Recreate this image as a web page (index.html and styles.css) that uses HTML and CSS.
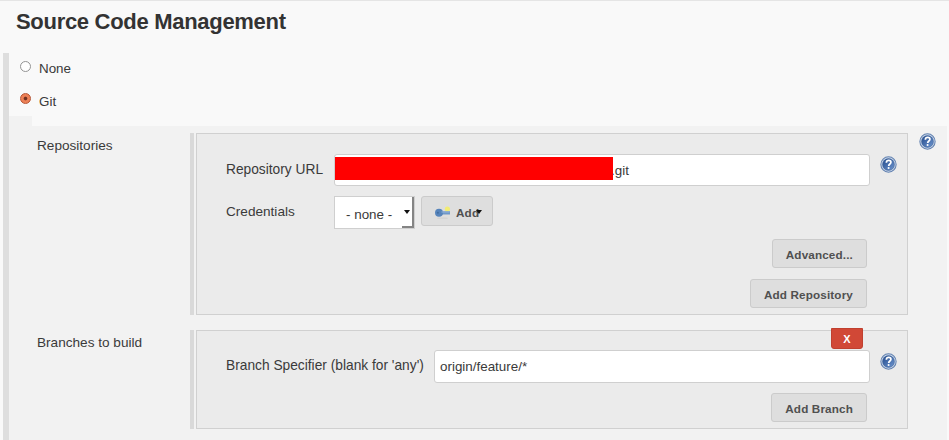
FILE: index.html
```
<!DOCTYPE html>
<html lang="en">
<head>
<meta charset="utf-8">
<title>Source Code Management</title>
<link rel="stylesheet" href="styles.css">
</head>
<body>
<svg class="defs" width="0" height="0" aria-hidden="true">
  <defs>
    <linearGradient id="blue" x1="0" y1="0" x2="1" y2="1">
      <stop offset="0" stop-color="#234b8d"/><stop offset="1" stop-color="#6f96cf"/>
    </linearGradient>
    <symbol id="help" viewBox="0 0 18 18">
      <circle cx="9" cy="9" r="8.1" fill="#cbd8ea" stroke="#6483b1" stroke-width="1.1"/>
      <circle cx="9" cy="9" r="6.3" fill="url(#blue)" stroke="#35598f" stroke-width=".5"/>
      <path d="M6.7 7.1C6.8 5.5 7.8 4.7 9.2 4.7c1.4 0 2.4.8 2.4 2 0 1.8-2.4 1.8-2.4 3.8" fill="none" stroke="#fff" stroke-width="1.8"/>
      <circle cx="9.1" cy="12.7" r="1.1" fill="#fff"/>
    </symbol>
  </defs>
</svg>
<main class="page">
  <h1 class="title">Source Code Management</h1>
  <section class="scm">
    <div class="rail"></div>
    <div class="content">
      <label class="option none"><span class="radio"></span><span class="option-name">None</span></label>
      <label class="option"><span class="radio checked"></span><span class="option-name">Git</span></label>
      <div class="git">
        <div class="row repos">
          <div class="row-label">Repositories</div>
          <div class="handle"></div>
          <div class="panel">
            <div class="field">
              <span class="label">Repository URL</span>
              <div class="input"><span class="redacted"></span><span class="suffix">.git</span></div>
              <svg class="help"><use href="#help"/></svg>
            </div>
            <div class="field credentials">
              <span class="label">Credentials</span>
              <div class="select"><span>- none -</span><span class="select-end"><i class="caret"></i></span></div>
              <div class="button add">
                <svg class="key" width="18" height="15" viewBox="0 0 18 15">
                  <ellipse cx="8.5" cy="13.2" rx="5.5" ry=".9" fill="#d4d4d4"/>
                  <circle cx="13.4" cy="4" r="2.6" fill="#f2ec74"/>
                  <path d="M7 6.2h9v3.3H7z" fill="#6f98c8"/>
                  <circle cx="5" cy="7.8" r="4" fill="#5684bb"/>
                  <path d="M7.5 7h8" stroke="#94b4d9"/>
                  <circle cx="3.9" cy="7.8" r="1" fill="#416c9f"/>
                </svg>
                <span>Add</span><i class="caret"></i>
              </div>
            </div>
            <div class="actions"><div class="button">Advanced...</div></div>
            <div class="actions second"><div class="button">Add Repository</div></div>
          </div>
          <svg class="help outer"><use href="#help"/></svg>
        </div>
        <div class="row branches">
          <div class="row-label">Branches to build</div>
          <div class="handle"></div>
          <div class="panel">
            <div class="delete">X</div>
            <div class="field branch">
              <span class="label">Branch Specifier (blank for 'any')</span>
              <div class="input"><span class="value">origin/feature/*</span></div>
              <svg class="help"><use href="#help"/></svg>
            </div>
            <div class="actions"><div class="button">Add Branch</div></div>
          </div>
        </div>
      </div>
    </div>
  </section>
</main>
</body>
</html>
```
FILE: styles.css
```
* { box-sizing: border-box; }
body {
  margin: 0;
  background: #f9f9f9;
  color: #3a3a3a;
  font: 13.4px/16px "Liberation Sans", Arial, sans-serif;
}
.defs { position: absolute; }
.page { width: 949px; height: 440px; overflow: hidden; border-top: 1px solid #e5e5e5; }
.title { margin: 0; height: 52px; padding: 8px 0 0 16px; color: #333; font-size: 22px; line-height: 26px; font-weight: bold; letter-spacing: -.3px; }
.scm { display: flex; height: 387px; }
.rail { width: 6px; margin-left: 3px; background: #dedede; }
.content { width: 938px; background: linear-gradient(#f2f2f2, #f2f2f2) 0 63px / 23px 10px no-repeat; }
.option { display: flex; height: 32px; padding: 7px 0 0 11px; }
.option.none { height: 33px; }
.radio { width: 11px; height: 11px; margin-top: 1px; border: 1px solid #949494; border-radius: 50%; background: #fff; }
.radio.checked { margin-top: 0; border-color: #b65332; background: radial-gradient(circle, #703020 0 1.3px, #ed8056 2.3px); }
.option-name { margin-left: 8px; padding-top: 1px; }
.git { margin-top: 8px; height: 314px; padding-top: 7px; background: #f2f2f2; }
.row { display: flex; }
.row-label { width: 181px; padding: 5px 0 0 28px; font-size: 13.6px; }
.handle { width: 4px; margin-right: 2px; background: #d9d9d9; }
.panel { width: 712px; border: 1px solid #d0d0d0; background: #ebebeb; padding-left: 29px; }
.repos .panel { height: 182px; padding-top: 20px; }
.branches { margin-top: 15px; }
.branches .panel { height: 99px; }
.help { width: 17px; height: 17px; margin: 2px 0 0 10px; flex: none; }
.help.outer { margin: 0 0 0 11px; }
.field { display: flex; height: 32px; }
.label { width: 108px; padding-top: 8px; flex: none; white-space: nowrap; font-size: 13.75px; }
.input { display: flex; width: 536px; height: 32px; border: 1px solid #cfcfcf; border-radius: 3px; background: #fff; }
.redacted { position: relative; z-index: 1; width: 278px; height: 23px; margin-top: 2px; background: red; }
.suffix { margin-left: -2px; padding-top: 8px; }
.credentials { margin-top: 10px; }
.credentials .label { font-size: 13.6px; }
.select { display: flex; justify-content: space-between; width: 81px; height: 33px; padding-left: 11px; border: 1px solid #cfcfcf; background: #fff; line-height: 35px; }
.select-end { width: 12px; height: 31px; border-right: 2px solid #858585; border-bottom: 2px solid #858585; display: flex; align-items: center; justify-content: center; }
.caret { flex: none; width: 0; height: 0; border: 3px solid transparent; border-top: 4px solid #111; border-bottom: 0; }
.button { display: flex; align-items: center; justify-content: center; height: 29px; padding: 2px 13px 0; border: 1px solid #cbcbcb; border-radius: 3px; background: #dedede; color: #505050; font-size: 11.7px; line-height: 15px; font-weight: bold; letter-spacing: .15px; }
.add { width: 72px; height: 30px; margin-left: 6px; padding: 2px 10px 0 12px; justify-content: flex-start; }
.key { flex: none; margin-right: 4px; }
.add .caret { margin-left: -3px; }
.actions { display: flex; justify-content: flex-end; margin: 11px 40px 0 0; }
.delete { width: 32px; height: 21px; margin: -3px 0 0 605px; border: 1px solid #c0402f; border-radius: 0 0 3px 3px; background: #d14836; color: #fff; font-size: 11px; line-height: 20px; font-weight: bold; text-align: center; }
.branch { height: 33px; margin-top: 1px; }
.branch .label { width: 208px; }
.branch .input { width: 436px; height: 33px; padding: 8px 0 0 5px; }
.branch .help { margin-top: 3px; }
.branches .actions { margin-top: 10px; }
```
